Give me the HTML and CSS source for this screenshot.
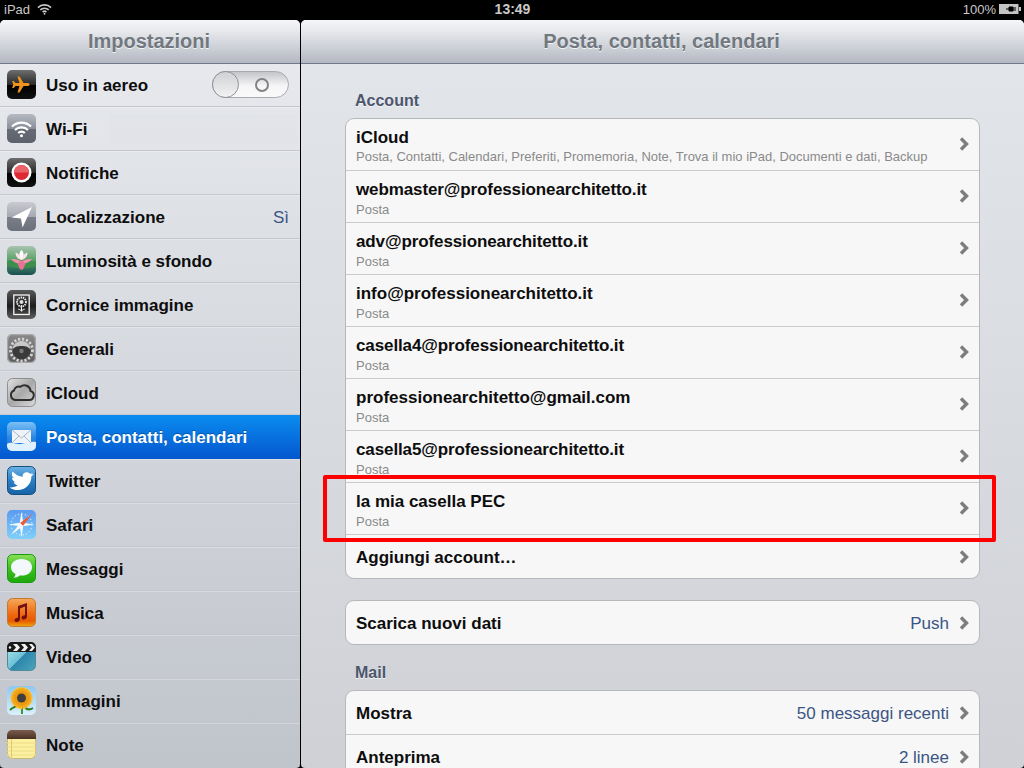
FILE: index.html
```html
<!DOCTYPE html>
<html lang="it">
<head>
<meta charset="utf-8">
<title>Impostazioni</title>
<link rel="stylesheet" href="styles.css">
</head>
<body>
<svg class="defs" aria-hidden="true">
  <defs>
    <linearGradient id="gBlack" x1="0" y1="0" x2="0" y2="1"><stop offset="0" stop-color="#6e6e6e"/><stop offset=".5" stop-color="#2a2a2a"/><stop offset=".52" stop-color="#000"/><stop offset="1" stop-color="#111"/></linearGradient>
    <linearGradient id="gGrey" x1="0" y1="0" x2="0" y2="1"><stop offset="0" stop-color="#b6bac2"/><stop offset=".5" stop-color="#8b8f99"/><stop offset=".52" stop-color="#666b76"/><stop offset="1" stop-color="#5d616c"/></linearGradient>
    <linearGradient id="gLoc" x1="0" y1="0" x2="0" y2="1"><stop offset="0" stop-color="#c9cbd0"/><stop offset=".5" stop-color="#a6a9b1"/><stop offset=".52" stop-color="#7b7f89"/><stop offset="1" stop-color="#6c707b"/></linearGradient>
    <linearGradient id="gSilver" x1="0" y1="0" x2="1" y2="1"><stop offset="0" stop-color="#e4e4e4"/><stop offset=".5" stop-color="#a8a8a8"/><stop offset="1" stop-color="#dcdcdc"/></linearGradient>
    <linearGradient id="gGear" x1="0" y1="0" x2="0" y2="1"><stop offset="0" stop-color="#8a8a8a"/><stop offset="1" stop-color="#5c5c5c"/></linearGradient>
    <linearGradient id="gDark" x1="0" y1="0" x2="0" y2="1"><stop offset="0" stop-color="#5a5a5a"/><stop offset=".55" stop-color="#1c1c1c"/><stop offset="1" stop-color="#606060"/></linearGradient>
    <linearGradient id="gMail" x1="0" y1="0" x2="0" y2="1"><stop offset="0" stop-color="#7cc0f6"/><stop offset=".55" stop-color="#2a86e2"/><stop offset="1" stop-color="#1a6fd6"/></linearGradient>
    <linearGradient id="gTwit" x1="0" y1="0" x2="0" y2="1"><stop offset="0" stop-color="#6cb3e6"/><stop offset=".5" stop-color="#2d7fc4"/><stop offset="1" stop-color="#1762a6"/></linearGradient>
    <linearGradient id="gSafari" x1="0" y1="0" x2="0" y2="1"><stop offset="0" stop-color="#5b9af0"/><stop offset="1" stop-color="#7fd0fa"/></linearGradient>
    <linearGradient id="gMsg" x1="0" y1="0" x2="0" y2="1"><stop offset="0" stop-color="#8ce05c"/><stop offset=".5" stop-color="#3cc020"/><stop offset="1" stop-color="#1da80a"/></linearGradient>
    <linearGradient id="gMusic" x1="0" y1="0" x2="0" y2="1"><stop offset="0" stop-color="#f7a95c"/><stop offset=".55" stop-color="#ee6a10"/><stop offset=".8" stop-color="#e85a00"/><stop offset="1" stop-color="#f0a810"/></linearGradient>
    <linearGradient id="gVideo" x1="0" y1="0" x2="1" y2="1"><stop offset="0" stop-color="#b8ecf0"/><stop offset=".5" stop-color="#6cc0d4"/><stop offset=".52" stop-color="#2c86ac"/><stop offset="1" stop-color="#4ea4bc"/></linearGradient>
    <linearGradient id="gSky" x1="0" y1="0" x2="0" y2="1"><stop offset="0" stop-color="#8cc8f4"/><stop offset="1" stop-color="#dcf0fc"/></linearGradient>
    <linearGradient id="gLotus" x1="0" y1="0" x2="0" y2="1"><stop offset="0" stop-color="#a9c4b0"/><stop offset=".45" stop-color="#5fa46c"/><stop offset="1" stop-color="#174f52"/></linearGradient>
    <linearGradient id="gBrown" x1="0" y1="0" x2="0" y2="1"><stop offset="0" stop-color="#7a5c4c"/><stop offset="1" stop-color="#4a3024"/></linearGradient>
  </defs>
</svg>

<header class="status">
  <div class="status-left">
    <span>iPad</span>
    <svg class="status-wifi" viewBox="0 0 16 12"><path d="M1 4.500a10 10 0 0 1 14 0M3.500 7a6.400 6.400 0 0 1 9 0M6 9.300a2.900 2.900 0 0 1 4 0" fill="none" stroke="#c9c9c9" stroke-width="1.700"/><circle cx="8" cy="11" r="1" fill="#c9c9c9"/></svg>
  </div>
  <div class="status-time">13:49</div>
  <div class="status-right">
    <span>100%</span>
    <svg class="status-batt" viewBox="0 0 22 10"><rect x="0" y="0" width="19.500" height="10" fill="#c4c4c4"/><rect x="20" y="3" width="2" height="4" fill="#c4c4c4"/><path d="M7 5h3M10 3h4v4h-4zM14 4h3M14 6h3" stroke="#000" fill="#000" stroke-width="1"/></svg>
  </div>
</header>

<div class="split">
  <aside class="side">
    <div class="bar side-bar">Impostazioni</div>
    <nav class="side-list">
      <div class="side-row">
        <svg class="icon" viewBox="0 0 29 29"><rect width="29" height="29" rx="5" fill="url(#gBlack)"/><path d="M22.500 14.500c0-1-1-1.500-2-1.500h-4l-4-6.500h-2l2 6.500h-4l-1.800-2h-1.500l1 3.500-1 3.500h1.500l1.800-2h4l-2 6.500h2l4-6.500h4c1 0 2-.5 2-1.500z" fill="#f0921e"/></svg>
        <span class="side-label">Uso in aereo</span>
        <span class="toggle"><span class="knob"></span><span class="toggle-o"></span></span>
      </div>
      <div class="side-row side-row-wifi">
        <svg class="icon" viewBox="0 0 29 29"><rect width="29" height="29" rx="5" fill="url(#gGrey)"/><path d="M5 12.500a13.500 13.500 0 0 1 19 0M8 16a9.200 9.200 0 0 1 13 0M11.200 19a4.600 4.600 0 0 1 6.600 0" fill="none" stroke="#fff" stroke-width="2.200"/><circle cx="14.500" cy="21.800" r="1.500" fill="#fff"/></svg>
        <span class="side-label">Wi-Fi</span>
      </div>
      <div class="side-row">
        <svg class="icon" viewBox="0 0 29 29"><rect width="29" height="29" rx="5" fill="url(#gBlack)"/><circle cx="14.500" cy="14.500" r="10" fill="#fff"/><circle cx="14.500" cy="14.500" r="7.500" fill="#dd2a32"/><path d="M7 14.500a7.500 7.500 0 0 1 15 0z" fill="#e9636a"/></svg>
        <span class="side-label">Notifiche</span>
      </div>
      <div class="side-row">
        <svg class="icon" viewBox="0 0 29 29"><rect width="29" height="29" rx="5" fill="url(#gLoc)"/><path d="M25 5 4.500 15.500l9.500 1 1.500 9z" fill="#fff"/></svg>
        <span class="side-label">Localizzazione</span>
        <span class="value">Sì</span>
      </div>
      <div class="side-row">
        <svg class="icon" viewBox="0 0 29 29"><rect width="29" height="29" rx="5" fill="url(#gLotus)"/><path d="M0 15c5-2 9 0 14 2 5-2 10-3 15-1v4c-5 1-9 3-14 2-5 1-10-1-15-3z" fill="#3f8f4c"/><path d="M14.500 4c2.800 2.500 3 6.500 0 10-3-3.500-2.800-7.500 0-10z" fill="#fff"/><path d="M8.500 6.500c3 .8 5.500 3.500 6 7.500-3.500-.5-6-3.500-6-7.500zM20.500 6.500c-3 .8-5.500 3.500-6 7.500 3.500-.5 6-3.500 6-7.500z" fill="#f8e4e8"/><path d="M4 13c4-.5 8 .5 10.500 3-3 2.500-7.500 1-10.500-3zM25 13c-4-.5-8 .5-10.500 3 3 2.500 7.500 1 10.500-3z" fill="#ef93ae"/><path d="M10.500 17.500l4-3.500 4 3.500-2.500 6h-3z" fill="#ea7298"/></svg>
        <span class="side-label">Luminosità e sfondo</span>
      </div>
      <div class="side-row">
        <svg class="icon" viewBox="0 0 29 29"><rect width="29" height="29" rx="5" fill="url(#gDark)"/><rect x="6.800" y="5" width="15.400" height="19.500" fill="none" stroke="#f4f4f4" stroke-width="1.300"/><path d="M14.500 15v6.500M14.500 21c-1-1.200-2-1.800-3.200-1.800M14.500 21c1-1.200 2-1.800 3.200-1.800" stroke="#f4f4f4" fill="none"/><circle cx="14.500" cy="12" r="4.500" fill="none" stroke="#eee" stroke-width="1.800" stroke-dasharray="1.400 .8"/><circle cx="14.500" cy="12" r="2" fill="#ddd"/></svg>
        <span class="side-label">Cornice immagine</span>
      </div>
      <div class="side-row">
        <svg class="icon" viewBox="0 0 29 29"><rect x=".5" y=".5" width="28" height="28" rx="5" fill="url(#gGear)" stroke="#a6a6a6" stroke-width="1.500"/><circle cx="14.500" cy="16" r="11" fill="none" stroke="#d4d4d4" stroke-width="2.800" stroke-dasharray="2.200 1.800"/><circle cx="14.500" cy="16" r="9.200" fill="#3a3a3a"/><path d="M5.300 16a9.200 9.200 0 0 1 18.400 0c-1.500-2.500-4-4-9.200-4s-7.700 1.500-9.200 4z" fill="#c8c8c8"/><circle cx="14.500" cy="17" r="2.200" fill="#777"/></svg>
        <span class="side-label">Generali</span>
      </div>
      <div class="side-row">
        <svg class="icon" viewBox="0 0 29 29"><rect x=".5" y=".5" width="28" height="28" rx="5" fill="url(#gSilver)" stroke="#8e8e8e"/><path d="M8 22a5 5 0 0 1-1-9.500 5 5 0 0 1 6.500-3.700 6 6 0 0 1 10 4.200 4.600 4.600 0 0 1-1.500 9z" fill="none" stroke="#2f2f2f" stroke-width="2"/></svg>
        <span class="side-label">iCloud</span>
      </div>
      <div class="side-row active">
        <svg class="icon" viewBox="0 0 29 29"><rect width="29" height="29" rx="5" fill="url(#gMail)"/><path d="M0 22c5-3 9 1 14 0s9-3 15-2v4a5 5 0 0 1-5 5H5a5 5 0 0 1-5-5z" fill="#dff1fc"/><rect x="5" y="8" width="19" height="13" fill="#eef3f8"/><path d="M5 8l9.500 8L24 8M5 21l7-7M24 21l-7-7" fill="none" stroke="#a9b8c8"/></svg>
        <span class="side-label">Posta, contatti, calendari</span>
      </div>
      <div class="side-row">
        <svg class="icon" viewBox="0 0 29 29"><rect x=".5" y=".5" width="28" height="28" rx="5" fill="url(#gTwit)" stroke="#12507e"/><path d="M26 6.500c-1 .8-2 1.200-3 1.300-1.200-1.500-3.500-2.200-5.500-1-1.500 1-2 2.500-1.800 4C12 10.500 8.500 8.500 5.500 5.500c-1.300 2.500-.5 5 1.500 6.500-.8 0-1.500-.2-2-.5 0 2.500 1.500 4 3.700 4.700-.6.200-1.300.200-2 .1.600 1.800 2.200 2.800 4 3-2 1.500-5 2.500-8.200 2.200 7 4.500 14 2.500 18-1.500 3-3 4-6.500 3.800-9.500 1-.8 1.700-1.700 2.200-2.700-.8.400-1.500.5-2.300.6 1-.7 1.600-1.500 1.800-2.400z" fill="#fff"/></svg>
        <span class="side-label">Twitter</span>
      </div>
      <div class="side-row">
        <svg class="icon" viewBox="0 0 29 29"><rect width="29" height="29" rx="5" fill="url(#gSafari)"/><circle cx="14.500" cy="14.500" r="10.500" fill="none" stroke="#e8f4fe" stroke-width="1" stroke-dasharray="1.500 2"/><path d="M14.500 1.500l2 13-2 13-2-13zM1.500 14.500l13-2 13 2-13 2z" fill="#f4faff"/><path d="M25 4 13 13l3 3z" fill="#ef5a34"/><path d="M4 25l9-12 3 3z" fill="#f4faff"/></svg>
        <span class="side-label">Safari</span>
      </div>
      <div class="side-row">
        <svg class="icon" viewBox="0 0 29 29"><rect x=".5" y=".5" width="28" height="28" rx="5" fill="url(#gMsg)" stroke="#1a9a10"/><path d="M14.500 5C8 5 4 8.700 4 13.200c0 3 1.800 5.400 4.500 6.800 0 1.500-.8 2.800-2 3.800 2.500 0 4.500-1 6-2.300.7.100 1.300.1 2 .1 6.500 0 10.500-3.800 10.500-8.400S21 5 14.500 5z" fill="#f2f8fc"/></svg>
        <span class="side-label">Messaggi</span>
      </div>
      <div class="side-row">
        <svg class="icon" viewBox="0 0 29 29"><rect x=".5" y=".5" width="28" height="28" rx="5" fill="url(#gMusic)" stroke="#c07a30"/><path d="M11 8l9-3v13.500c0 1.800-1.600 3-3.300 3-1.400 0-2.200-.8-2.200-1.800 0-1.400 1.500-2.400 3-2.400l.5.05V8.500L13 10.500v10.500c0 1.800-1.600 3-3.300 3-1.400 0-2.200-.8-2.200-1.800 0-1.400 1.500-2.400 3-2.400l.5.05z" fill="#701010"/></svg>
        <span class="side-label">Musica</span>
      </div>
      <div class="side-row">
        <svg class="icon" viewBox="0 0 29 29"><rect x=".5" y=".5" width="28" height="28" rx="5" fill="url(#gVideo)" stroke="#4e8a98"/><path d="M0 10V5a5 5 0 0 1 5-5h19a5 5 0 0 1 5 5v5z" fill="#1a1a1a"/><path d="M6 2h4l3 3.500-3 3.500H6l3-3.500zM14 2h4l3 3.500-3 3.500h-4l3-3.500zM22 2h3l3 3.500-3 3.500h-3l3-3.500z" fill="#f2f2f2"/><circle cx="3" cy="5.500" r="1.200" fill="#eee"/></svg>
        <span class="side-label">Video</span>
      </div>
      <div class="side-row">
        <svg class="icon" viewBox="0 0 29 29"><rect width="29" height="29" rx="5" fill="url(#gSky)"/><path d="M3 24c3-3 6-4 10-4M26 22c-3 2-6 2-9-1" fill="none" stroke="#2f7d24" stroke-width="2"/><path d="M14 17h2v11h-2z" fill="#3f9a2c"/><circle cx="14.500" cy="12" r="10.500" fill="#f4a81c" stroke="#f8c83a" stroke-width="1.500" stroke-dasharray="2.500 1.500"/><circle cx="14.500" cy="12" r="7.500" fill="#eb9a10"/><circle cx="14.500" cy="12" r="4.500" fill="#3e3e3e"/></svg>
        <span class="side-label">Immagini</span>
      </div>
      <div class="side-row">
        <svg class="icon" viewBox="0 0 29 29"><rect x=".5" y=".5" width="28" height="28" rx="5" fill="#fbefa0" stroke="#c9b876"/><path d="M0 9V5a5 5 0 0 1 5-5h19a5 5 0 0 1 5 5v4z" fill="url(#gBrown)"/><path d="M0 13h29M0 17h29M0 21h29M0 25h29" stroke="#efdd88"/><path d="M4.500 9v20" stroke="#dfc878"/></svg>
        <span class="side-label">Note</span>
      </div>
    </nav>
  </aside>

  <main class="detail">
    <div class="bar detail-bar">Posta, contatti, calendari</div>
    <div class="detail-body">
      <h2 class="section-title">Account</h2>
      <section class="group">
        <div class="cell cell-tall">
          <div class="cell-text"><div class="cell-title">iCloud</div><div class="cell-sub cell-sub-tight">Posta, Contatti, Calendari, Preferiti, Promemoria, Note, Trova il mio iPad, Documenti e dati, Backup</div></div>
          <svg class="chev" viewBox="0 0 10 14"><path d="M2 1.500 7.500 7 2 12.500" /></svg>
        </div>
        <div class="cell cell-tall">
          <div class="cell-text"><div class="cell-title title-tight">webmaster@professionearchitetto.it</div><div class="cell-sub">Posta</div></div>
          <svg class="chev" viewBox="0 0 10 14"><path d="M2 1.500 7.500 7 2 12.500" /></svg>
        </div>
        <div class="cell cell-tall">
          <div class="cell-text"><div class="cell-title title-tight">adv@professionearchitetto.it</div><div class="cell-sub">Posta</div></div>
          <svg class="chev" viewBox="0 0 10 14"><path d="M2 1.500 7.500 7 2 12.500" /></svg>
        </div>
        <div class="cell cell-tall">
          <div class="cell-text"><div class="cell-title">info@professionearchitetto.it</div><div class="cell-sub">Posta</div></div>
          <svg class="chev" viewBox="0 0 10 14"><path d="M2 1.500 7.500 7 2 12.500" /></svg>
        </div>
        <div class="cell cell-tall">
          <div class="cell-text"><div class="cell-title title-tight">casella4@professionearchitetto.it</div><div class="cell-sub">Posta</div></div>
          <svg class="chev" viewBox="0 0 10 14"><path d="M2 1.500 7.500 7 2 12.500" /></svg>
        </div>
        <div class="cell cell-tall">
          <div class="cell-text"><div class="cell-title">professionearchitetto@gmail.com</div><div class="cell-sub">Posta</div></div>
          <svg class="chev" viewBox="0 0 10 14"><path d="M2 1.500 7.500 7 2 12.500" /></svg>
        </div>
        <div class="cell cell-tall">
          <div class="cell-text"><div class="cell-title title-tight">casella5@professionearchitetto.it</div><div class="cell-sub">Posta</div></div>
          <svg class="chev" viewBox="0 0 10 14"><path d="M2 1.500 7.500 7 2 12.500" /></svg>
        </div>
        <div class="cell cell-tall">
          <div class="cell-text"><div class="cell-title">la mia casella PEC</div><div class="cell-sub">Posta</div></div>
          <svg class="chev" viewBox="0 0 10 14"><path d="M2 1.500 7.500 7 2 12.500" /></svg>
        </div>
        <div class="cell">
          <div class="cell-text"><div class="cell-title">Aggiungi account…</div></div>
          <svg class="chev" viewBox="0 0 10 14"><path d="M2 1.500 7.500 7 2 12.500" /></svg>
        </div>
      </section>
      <section class="group group-gap">
        <div class="cell">
          <div class="cell-text"><div class="cell-title">Scarica nuovi dati</div></div>
          <span class="value">Push</span>
          <svg class="chev" viewBox="0 0 10 14"><path d="M2 1.500 7.500 7 2 12.500" /></svg>
        </div>
      </section>
      <h2 class="section-title section-mail">Mail</h2>
      <section class="group">
        <div class="cell">
          <div class="cell-text"><div class="cell-title">Mostra</div></div>
          <span class="value">50 messaggi recenti</span>
          <svg class="chev" viewBox="0 0 10 14"><path d="M2 1.500 7.500 7 2 12.500" /></svg>
        </div>
        <div class="cell">
          <div class="cell-text"><div class="cell-title">Anteprima</div></div>
          <span class="value">2 linee</span>
          <svg class="chev" viewBox="0 0 10 14"><path d="M2 1.500 7.500 7 2 12.500" /></svg>
        </div>
      </section>
    </div>
  </main>
</div>
<div class="annotation"></div>
</body>
</html>
```

FILE: styles.css
```css
* { box-sizing: border-box; }
html, body { margin: 0; padding: 0; width: 1024px; height: 768px; overflow: hidden; background: #000; }
body { font-family: "Liberation Sans", Arial, sans-serif; display: flex; flex-direction: column; position: relative; }
.defs { position: absolute; width: 0; height: 0; }

.status { height: 20px; flex: none; background: #000; color: #c9c9c9; font-size: 13px; display: grid; grid-template-columns: 1fr auto 1fr; align-items: center; padding: 0 3px 2px 4px; }
.status-left { display: flex; align-items: center; gap: 7px; }
.status-wifi { width: 15px; height: 12px; }
.status-time { font-weight: bold; font-size: 14px; }
.status-right { display: flex; justify-content: flex-end; align-items: center; gap: 3px; }
.status-batt { width: 22px; height: 10px; }

.split { flex: 1; display: flex; gap: 1px; min-height: 0; }
.side { width: 300px; flex: none; display: flex; flex-direction: column; border-radius: 5px 5px 4px 4px; overflow: hidden; background: linear-gradient(#e9ebef, #c0c4cb); }
.detail { flex: 1; display: flex; flex-direction: column; border-radius: 5px 5px 4px 4px; overflow: hidden; background: linear-gradient(#e3e6eb, #cfd1d7); }

.bar { height: 44px; flex: none; display: flex; align-items: center; justify-content: center; font-size: 20px; font-weight: bold; color: #71787f; text-shadow: 0 1px 0 #f2f3f5; background: linear-gradient(#f5f6f8 0, #e4e6ea 30%, #b4b8c2 100%); border-bottom: 1px solid #70778a; padding-right: 2px; }

.side-list { display: flex; flex-direction: column; margin-top: -1px; }
.side-row { height: 44px; flex: none; display: flex; align-items: center; padding: 0 11px 0 7px; gap: 10px; border-bottom: 1px solid #c5c7cc; box-shadow: inset 0 1px 0 rgba(255,255,255,.25); }
.side-row:first-child { box-shadow: none; }
.side-row.active { color: #fff; background: linear-gradient(#0a8cf0, #0558cf); border-bottom-color: #0558cf; box-shadow: none; }
.side-row-wifi { position: relative; }
.side-row-wifi::after { content: ""; position: absolute; left: 110px; right: 3px; top: 7px; bottom: 6px; background: rgba(120,120,125,.015); }
.icon { width: 29px; height: 29px; flex: none; }
.side-label { flex: 1; font-size: 17px; line-height: 20px; padding-top: 2px; font-weight: bold; white-space: nowrap; color: #0d0d0d; }
.active .side-label { color: #fff; text-shadow: 0 -1px 0 rgba(0,0,0,.3); }
.value { font-size: 17px; line-height: 20px; padding-top: 2px; color: #3b5585; white-space: nowrap; }

.toggle { flex: none; position: relative; display: block; width: 77px; height: 27px; border-radius: 14px; border: 1px solid #a8aaae; background: linear-gradient(#c4c5c8, #f5f5f6 55%, #fafafa); }
.knob { position: absolute; left: -1px; top: -1px; width: 27px; height: 27px; border-radius: 50%; border: 1px solid #8f9296; background: linear-gradient(#d0d1d4, #f2f2f3); }
.toggle-o { position: absolute; left: 42px; top: 6px; width: 14px; height: 14px; border-radius: 50%; border: 2px solid #808285; }

.detail-body { flex: 1; padding: 0 44px; min-height: 0; overflow: hidden; }
.section-title { margin: 0; padding: 27px 0 7px 10px; font-size: 16px; line-height: 20px; font-weight: bold; color: #4c566c; text-shadow: 0 1px 0 #f4f5f7; }
.section-mail { padding-top: 18px; }
.group { background: #f7f7f7; border: 1px solid #b6b8bc; border-radius: 9px; overflow: hidden; }
.group-gap { margin-top: 21px; }

.cell { height: 44px; display: flex; align-items: center; padding: 0 10px 0 10px; gap: 10px; border-bottom: 1px solid #cbcbcd; }
.cell:last-child { border-bottom: 0; height: 43px; }
.cell-tall { height: 52px; padding-top: 9px; align-items: flex-start; }
.cell-text { flex: 1; min-width: 0; }
.cell-title { font-size: 17px; line-height: 20px; padding-top: 2px; font-weight: bold; color: #0d0d0d; white-space: nowrap; }
.cell-tall .cell-title { padding-top: 0; }
.title-tight { letter-spacing: -.11px; }
.cell-sub { font-size: 13px; line-height: 20px; color: #8a8a8a; white-space: nowrap; }
.cell-sub-tight { margin-top: -1px; }
.chev { width: 10px; height: 14px; flex: none; fill: none; stroke: #7d7d7d; stroke-width: 3.400; }
.cell-tall .chev { margin-top: 9px; }

.annotation { position: absolute; left: 323px; top: 475px; width: 673px; height: 67px; border: 4px solid #ff0000; border-radius: 2px; }
```
